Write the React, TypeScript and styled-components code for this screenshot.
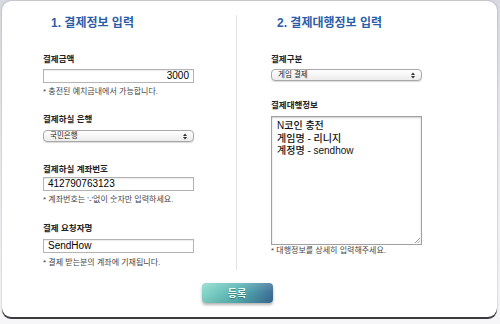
import React from "react";
import styled, { createGlobalStyle } from "styled-components";

const Global = createGlobalStyle`
    html, body {
        margin: 0;
        padding: 0;
        background: #f4f4f6;
        font-family: "Liberation Sans", "Noto Sans CJK KR", sans-serif;
    }
`;

const Page = styled.div`
    width: 500px;
    height: 324px;
    padding: 1px 3px 0 2px;
    box-sizing: border-box;
    background: linear-gradient(#d9d9e2, #eeeef2 60%, #f6f6f8);
`;

const Card = styled.div`
    height: 316px;
    box-sizing: border-box;
    background: #fff;
    border-radius: 9px;
    box-shadow: 0 2px 0 #3c3c40, 0 0 2px rgba(0, 0, 0, 0.35);
    display: flex;
    flex-direction: column;
`;

const Columns = styled.div`
    display: flex;
    padding-top: 14px;
`;

const Column = styled.div<{ $left?: boolean }>`
    width: ${(p) => (p.$left ? "235px" : "260px")};
    box-sizing: border-box;
    padding-left: ${(p) => (p.$left ? "41px" : "34px")};
    border-right: ${(p) => (p.$left ? "1px solid #e4e4e4" : "none")};
    height: 255px;
`;

const Title = styled.h2<{ $indent: number }>`
    margin: 0 0 0 ${(p) => p.$indent}px;
    font-size: 12px;
    line-height: 16px;
    font-weight: bold;
    color: #2c5ea8;
`;

const Field = styled.div<{ $top: number }>`
    margin-top: ${(p) => p.$top}px;
`;

const Label = styled.div<{ $gap: number }>`
    font-size: 8.5px;
    font-weight: bold;
    color: #222;
    line-height: 12px;
    margin-bottom: ${(p) => p.$gap}px;
`;

const TextBox = styled.div<{ $right?: boolean }>`
    width: 151px;
    height: 14px;
    box-sizing: border-box;
    border: 1px solid #b4b4b4;
    box-shadow: inset 0 1px 1px rgba(0, 0, 0, 0.08);
    background: #fff;
    font-size: 10px;
    line-height: 12px;
    padding: 0 4px;
    color: #000;
    text-align: ${(p) => (p.$right ? "right" : "left")};
`;

const Select = styled.div`
    width: 151px;
    height: 12px;
    box-sizing: border-box;
    border: 1px solid #a8a8a8;
    border-radius: 4px;
    background: linear-gradient(#ffffff, #ececec);
    box-shadow: 0 1px 1px rgba(0, 0, 0, 0.15);
    font-size: 7.5px;
    line-height: 10px;
    padding: 0 6px 0 6px;
    display: flex;
    justify-content: space-between;
    align-items: center;
    color: #222;
`;

const Area = styled.div`
    position: relative;
    width: 151px;
    height: 129px;
    box-sizing: border-box;
    border: 1px solid #a0a0a0;
    box-shadow: inset 0 1px 2px rgba(0, 0, 0, 0.2);
    padding: 3px 5px;
    font-size: 10px;
    font-weight: 500;
    line-height: 12.5px;
    color: #111;
    white-space: pre-line;
`;

const Grip = styled.svg`
    position: absolute;
    right: 1px;
    bottom: 1px;
`;

const Help = styled.div<{ $gap: number }>`
    font-size: 8px;
    line-height: 11px;
    color: #444;
    margin-top: ${(p) => p.$gap}px;
`;

const Footer = styled.div`
    display: flex;
    justify-content: center;
    padding-top: 13px;
    padding-right: 25px;
`;

const Button = styled.button`
    width: 71px;
    height: 20px;
    border: none;
    border-radius: 4px;
    background: linear-gradient(rgba(255, 255, 255, 0.18), rgba(255, 255, 255, 0) 50%, rgba(0, 0, 0, 0.08)),
        linear-gradient(100deg, #8ad8cb 0%, #55b3b3 50%, #3c6b96 100%);
    box-shadow: 0 2px 3px rgba(0, 0, 0, 0.3);
    color: #e6fff2;
    font-family: "Noto Sans CJK KR", sans-serif;
    font-weight: bold;
    font-size: 10px;
    line-height: 20px;
    text-shadow: 0 1px 1px rgba(0, 0, 0, 0.3);
    padding: 0;
`;

function SelectBox({ value }: { value: string }) {
    return (
        <Select>
            <span>{value}</span>
            <svg width="4" height="7" viewBox="0 0 4 7">
                <path d="M0 3 L2 0.5 L4 3 Z M0 4 L2 6.5 L4 4 Z" fill="#333" />
            </svg>
        </Select>
    );
}

export default function App() {
    return (
        <Page>
            <Global />
            <Card>
                <Columns>
                    <Column $left>
                        <Title $indent={8}>1. 결제정보 입력</Title>
                        <Field $top={22}>
                            <Label $gap={4}>결제금액</Label>
                            <TextBox $right>3000</TextBox>
                            <Help $gap={3}>* 충전된 예치금내에서 가능합니다.</Help>
                        </Field>
                        <Field $top={16}>
                            <Label $gap={5}>결제하실 은행</Label>
                            <SelectBox value="국민은행" />
                        </Field>
                        <Field $top={21}>
                            <Label $gap={2}>결제하실 계좌번호</Label>
                            <TextBox>412790763123</TextBox>
                            <Help $gap={3}>* 계좌번호는 '-'없이 숫자만 입력하세요.</Help>
                        </Field>
                        <Field $top={17}>
                            <Label $gap={5}>결제 요청자명</Label>
                            <TextBox>SendHow</TextBox>
                            <Help $gap={4}>* 결제 받는분의 계좌에 기재됩니다.</Help>
                        </Field>
                    </Column>
                    <Column>
                        <Title $indent={6}>2. 결제대행정보 입력</Title>
                        <Field $top={22}>
                            <Label $gap={4}>결제구분</Label>
                            <SelectBox value="게임 결제" />
                        </Field>
                        <Field $top={18}>
                            <Label $gap={5}>결제대행정보</Label>
                            <Area>
                                {"N코인 충전\n게임명 - 리니지\n계정명 - sendhow"}
                                <Grip width="6" height="6" viewBox="0 0 6 6">
                                    <path d="M1 6 L6 1 M3.5 6 L6 3.5" stroke="#888" strokeWidth="0.8" />
                                </Grip>
                            </Area>
                            <Help $gap={0}>* 대행정보를 상세히 입력해주세요.</Help>
                        </Field>
                    </Column>
                </Columns>
                <Footer>
                    <Button>등록</Button>
                </Footer>
            </Card>
        </Page>
    );
}
